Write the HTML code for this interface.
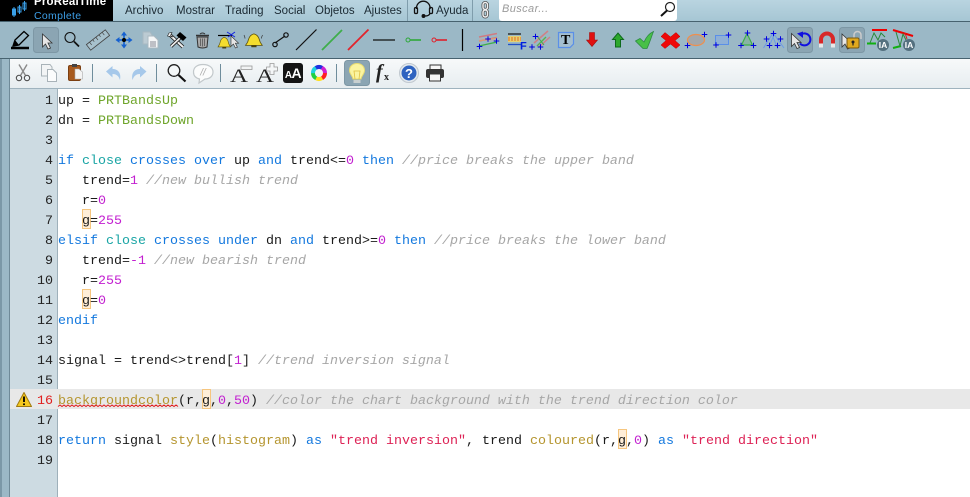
<!DOCTYPE html>
<html><head><meta charset="utf-8"><style>
html,body{margin:0;padding:0;width:970px;height:497px;overflow:hidden;background:#fff}
.a{position:absolute}
#menu{left:0;top:0;width:970px;height:21px;background:linear-gradient(#b9d4e0,#a6c6d4)}
.m{position:absolute;top:4px;font:11.5px/15px "Liberation Sans",sans-serif;color:#1b2a33;white-space:nowrap}
#tb1{left:0;top:21px;width:970px;height:38px;background:#9bb8c6;border-top:1px solid #47626f;border-bottom:1px solid #47626f;box-sizing:border-box}
#tb2{left:0;top:59px;width:970px;height:30px;background:linear-gradient(#f7f9fa,#e7edf0);border-bottom:1px solid #9fb3be;box-sizing:border-box}
#side{left:0;top:89px;width:10px;height:408px;background:#9bb8c6;box-shadow:inset 2px 0 0 #7b98a7,inset -1px 0 0 #6f8a98}
#strip{left:0;top:59px;width:10px;height:30px;background:#9bb8c6;box-shadow:inset 2px 0 0 #7b98a7,inset -1px 0 0 #6f8a98}
#gut{left:10px;top:89px;width:47px;height:408px;background:#cddbe2;border-right:1px solid #9eb0ba}
.hl{position:absolute;left:10px;top:389px;width:960px;height:20px;background:#e8e8e8}
.box{position:absolute;background:#ffeed8;box-shadow:inset 0 0 0 1px #f6c67f;width:9px;height:20px}
pre{margin:0;position:absolute;font:13.333px/20px "Liberation Mono",monospace;color:#1a1a1a;white-space:pre}
#code{left:58px;top:92px}
#nums{left:10px;top:92px;width:43px;text-align:right;color:#222}
b{font-weight:normal}
.k{color:#1378de}.t{color:#1aa5a5}.g{color:#6fa52b}.n{color:#c21fd0}.c{color:#a6a6a6;font-style:italic}.f{color:#b5952f}.s{color:#dd2255}
</style></head><body>
<div class="a" id="menu"></div>
<div class="a" style="left:0;top:0;width:113px;height:21px;background:#000;overflow:hidden">
<div class="a" style="left:34px;top:-5px;font:bold 11.5px/14px 'Liberation Sans',sans-serif;color:#fff;white-space:nowrap;letter-spacing:.2px">ProRealTime</div>
<div class="a" style="left:34px;top:10px;font:10.5px/13px 'Liberation Sans',sans-serif;color:#3d9ee6;white-space:nowrap;letter-spacing:.3px">Complete</div>
</div>
<div class="m" style="left:125px">Archivo</div>
<div class="m" style="left:176px">Mostrar</div>
<div class="m" style="left:225px">Trading</div>
<div class="m" style="left:274px">Social</div>
<div class="m" style="left:315px">Objetos</div>
<div class="m" style="left:364px">Ajustes</div>
<div class="m" style="left:436px">Ayuda</div>
<div class="a" style="left:407px;top:0;width:1px;height:21px;background:#7f9dac"></div>
<div class="a" style="left:472px;top:0;width:1px;height:21px;background:#7f9dac"></div>
<div class="a" style="left:499px;top:0;width:178px;height:21px;background:#fff;border-radius:0 0 3px 3px"></div>
<div class="a" style="left:502px;top:2px;font:italic 11px/15px 'Liberation Sans',sans-serif;color:#9a9a9a;letter-spacing:.4px">Buscar...</div>
<div class="a" id="tb1"></div>
<div class="a" id="tb2"></div>
<div class="a" id="strip"></div>
<div class="a" id="side"></div>
<div class="a" id="gut"></div>
<div class="hl"></div>
<div class="box" style="left:82px;top:209px"></div>
<div class="box" style="left:82px;top:289px"></div>
<div class="box" style="left:202px;top:389px"></div>
<div class="box" style="left:618px;top:429px"></div>
<pre id="nums">1
2
3
4
5
6
7
8
9
10
11
12
13
14
15
<span style="color:#e02020">16</span>
17
18
19</pre>
<pre id="code">up = <b class="g">PRTBandsUp</b>
dn = <b class="g">PRTBandsDown</b>

<b class="k">if</b> <b class="t">close</b> <b class="k">crosses over</b> up <b class="k">and</b> trend&lt;=<b class="n">0</b> <b class="k">then</b> <b class="c">//price breaks the upper band</b>
   trend=<b class="n">1</b> <b class="c">//new bullish trend</b>
   r=<b class="n">0</b>
   g=<b class="n">255</b>
<b class="k">elsif</b> <b class="t">close</b> <b class="k">crosses under</b> dn <b class="k">and</b> trend&gt;=<b class="n">0</b> <b class="k">then</b> <b class="c">//price breaks the lower band</b>
   trend=<b class="n">-1</b> <b class="c">//new bearish trend</b>
   r=<b class="n">255</b>
   g=<b class="n">0</b>
<b class="k">endif</b>

signal = trend&lt;&gt;trend[<b class="n">1</b>] <b class="c">//trend inversion signal</b>

<b class="f">backgroundcolor</b>(r,g,<b class="n">0</b>,<b class="n">50</b>) <b class="c">//color the chart background with the trend direction color</b>

<b class="k">return</b> signal <b class="f">style</b>(<b class="f">histogram</b>) <b class="k">as</b> <b class="s">"trend inversion"</b>, trend <b class="f">coloured</b>(r,g,<b class="n">0</b>) <b class="k">as</b> <b class="s">"trend direction"</b>
</pre>
<svg class="a" style="left:0;top:0" width="970" height="497" viewBox="0 0 970 497" font-family="Liberation Sans,sans-serif">
<defs>
<path id="ptr" d="M0 0V13L3 10 5.500 15 8 14 5.500 9H9.500Z" fill="#e6e6e6" stroke="#333" stroke-width=".8"/>
<path id="pl" d="M-2.800 0H2.800M0-2.800V2.800" stroke="#0000e0" stroke-width="1" fill="none"/>
<g id="bell"><path d="M0 14H16L14 10.500C13 8 13 3 8 1.500C3 3 3 8 2 10.500Z" fill="#f4dd2e" stroke="#5e5310" stroke-width=".8"/><rect x="5.500" y="14" width="5" height="2" fill="#4a4210"/></g>
</defs>
<!-- logo candles -->
<g stroke="#3aa0e8" fill="#3aa0e8"><path d="M14 7V17M19.500 5V14M24.500 1V11" stroke-width="1" fill="none"/><rect x="12.500" y="9" width="3" height="6"/><rect x="18" y="7" width="3" height="5" fill="none"/><rect x="23" y="3" width="3" height="6" fill="none"/></g>
<!-- headset -->
<g fill="none" stroke="#111" stroke-width="1.300"><path d="M416.500 9V8a6.800 6.800 0 0 1 13.600 0V9"/><rect x="414.500" y="7.500" width="3" height="6" rx="1.300"/><rect x="429.500" y="7.500" width="3" height="6" rx="1.300"/><path d="M430 13.500Q429 16 425 16"/><circle cx="423.500" cy="16" r="1.300" fill="#111"/></g>
<!-- link -->
<g fill="none" stroke="#555" stroke-width="3"><rect x="483" y="2.500" width="4.500" height="7" rx="2.200"/><rect x="483" y="10" width="4.500" height="7" rx="2.200"/></g>
<g fill="none" stroke="#f0f0f0" stroke-width="1.400"><rect x="483" y="2.500" width="4.500" height="7" rx="2.200"/><rect x="483" y="10" width="4.500" height="7" rx="2.200"/></g>
<!-- search lens -->
<circle cx="670" cy="7" r="4.500" fill="#fff" stroke="#222" stroke-width="1.200"/><path d="M667 10.500L661 16" stroke="#111" stroke-width="2"/>
<!-- selected boxes -->
<g fill="#8ba5b3" stroke="#7d97a5"><rect x="33.500" y="27.500" width="25" height="25" rx="3"/><rect x="787.500" y="27.500" width="25" height="25" rx="3"/><rect x="839.500" y="27.500" width="25" height="25" rx="3"/><rect x="344.500" y="60.500" width="25" height="25" rx="3"/></g>
<!-- pencil -->
<path d="M11 48H29" stroke="#000" stroke-width="2.500"/><path d="M13 46L15 40 24 31.500 28.500 35.500 19 45Z" fill="#9bb8c6" stroke="#000" stroke-width="1.300"/><path d="M13 46L15 40 19 45Z" fill="#000"/>
<use href="#ptr" x="42.500" y="34"/>
<!-- magnifier -->
<circle cx="70" cy="37.500" r="5" fill="none" stroke="#111" stroke-width="1.100"/><path d="M74 41.500L79 46.500" stroke="#111" stroke-width="1.800"/>
<!-- ruler -->
<g transform="translate(98 40) rotate(-38)"><rect x="-12" y="-3.500" width="24" height="7" fill="#a7c1cd" stroke="#444" stroke-width=".8"/><path d="M-8-3.500V0M-4-3.500V-1M0-3.500V0M4-3.500V-1M8-3.500V0" stroke="#444" stroke-width=".7"/></g>
<!-- move -->
<g fill="#1560d0"><path d="M124 31.500L127 35.500H121Z"/><path d="M124 48.500L127 44.500H121Z"/><path d="M115.500 40L119.500 37V43Z"/><path d="M132.500 40L128.500 37V43Z"/><rect x="123.200" y="35" width="1.600" height="10"/><rect x="119" y="39.200" width="10" height="1.600"/></g><circle cx="124" cy="40" r="2" fill="#000"/>
<!-- copy disabled -->
<path d="M143 32H150L152 35V44H143Z" fill="#bccbd3" stroke="#a8b9c2"/><path d="M148 36H154L158 40V48H148Z" fill="#f4f6f7" stroke="#aab8c0"/><path d="M150 42H156M150 44H156M150 46H156" stroke="#667" stroke-width=".7"/>
<!-- tools -->
<path d="M170 35L183 47" stroke="#222" stroke-width="3.600"/><path d="M170 35L183 47" stroke="#f0f0f0" stroke-width="2"/><path d="M167.500 36L169 33 172 32.500 170.500 35.500 173 37Z" fill="#f0f0f0" stroke="#222" stroke-width=".6"/><path d="M171 46.500L181 37" stroke="#222" stroke-width="3.400"/><path d="M171 46.500L181 37" stroke="#f0f0f0" stroke-width="1.600"/><path d="M180 32L186.500 37.500 183 41 176.500 35.500Z" fill="#000"/>
<!-- trash -->
<path d="M196 35.500H209" stroke="#333" stroke-width="1.500"/><path d="M200 34Q202.500 32 205 34" fill="none" stroke="#333"/><path d="M197 37H208L207 47Q202.500 49 198 47Z" fill="#a9a9a9" stroke="#333"/><path d="M200.500 38.500V46M202.500 38.500V46.500M204.500 38.500V46" stroke="#555" stroke-width=".8"/>
<!-- bell + cross -->
<path d="M218 35.500H232" stroke="#000" stroke-width="1.200"/><path d="M227 32L235 37M235 32L228 37" stroke="#1020e0" stroke-width="1"/>
<use href="#bell" transform="translate(218 36) scale(.78)"/>
<use href="#ptr" transform="translate(231 36) scale(.8)"/>
<!-- bell ringing -->
<use href="#bell" transform="translate(245.500 32.500) scale(1.05 .92)"/>
<path d="M244 35Q245 37 245 38.500M262.500 35Q261.500 37 261.500 38.500" stroke="#333" fill="none" stroke-width=".7"/>
<!-- node line -->
<path d="M275 43L285 36" stroke="#111" stroke-width="1.200"/><circle cx="275" cy="44.500" r="2.200" fill="none" stroke="#111" stroke-width="1.200"/><circle cx="286" cy="35" r="2.200" fill="none" stroke="#111" stroke-width="1.200"/>
<!-- lines -->
<path d="M296 50L316.500 29.500" stroke="#111" stroke-width="1.200"/>
<path d="M322 50L342 30" stroke="#3eae4a" stroke-width="1.800"/>
<path d="M348 50L368.500 29.500" stroke="#e3232b" stroke-width="1.800"/>
<path d="M373 40H395" stroke="#111" stroke-width="1.300"/>
<circle cx="408" cy="40" r="2" fill="none" stroke="#2ea83a"/><path d="M410 40H421" stroke="#2ea83a" stroke-width="1.600"/>
<circle cx="434" cy="40" r="2" fill="none" stroke="#e0202a"/><path d="M436 40H447" stroke="#e0202a" stroke-width="1.600"/>
<path d="M462.500 29V51" stroke="#000" stroke-width="1.200"/>
<!-- channel -->
<path d="M479 37L497 33.500M479 41L497 37.500" stroke="#d07a80" stroke-width="1.500"/><path d="M479 41L497 38" stroke="#e09a5a"/><path d="M479 46L497 42" stroke="#3eae4a" stroke-width="1.300"/><path d="M479 38H497V41H479Z" fill="#d8a09a" opacity=".35"/>
<use href="#pl" x="479.500" y="46.500"/><use href="#pl" x="488" y="39"/><use href="#pl" x="496.500" y="41"/>
<!-- fib -->
<path d="M508 34H521" stroke="#111" stroke-width="1.200"/><rect x="508" y="36" width="13" height="6" fill="#f6d75a" opacity=".8"/><path d="M508 38H521M508 40H521" stroke="#e86a20" stroke-dasharray="2 1"/><path d="M508 44.500H522" stroke="#2050c8" stroke-width="1.300"/>
<text x="520" y="49.500" font-size="11" font-weight="bold" fill="#0020e0">F</text>
<!-- pitch -->
<path d="M534 43L548 31" stroke="#d08086" stroke-width="1.500"/><path d="M539 47L550 37" stroke="#d08086" stroke-width="1.500"/><path d="M537 46L546 37" stroke="#5cb04a" stroke-width="1.300"/><path d="M537 36L544 45" stroke="#3eae4a"/>
<use href="#pl" x="535.500" y="36.500"/><use href="#pl" x="532" y="47"/><use href="#pl" x="540.500" y="47"/>
<!-- T -->
<path d="M558.500 32.500H573.500V44L570 47.500H558.500Z" fill="#a4bfd0" stroke="#5a8fe8" stroke-width="1.200"/>
<text x="561" y="44" font-family="Liberation Serif,serif" font-size="14" font-weight="bold" fill="#000">T</text>
<!-- arrows -->
<path d="M589.500 32.500H594.500V40H597.500L592 46.500 586.500 40H589.500Z" fill="#e01010" stroke="#a01010" stroke-width=".6"/>
<path d="M615.500 47H620.500V39.500H623.500L618 33 612.500 39.500H615.500Z" fill="#2da82d" stroke="#0e6a1c"/>
<!-- check -->
<path d="M635.500 41L640 38.500 644 42C646 37.500 649 33.500 653.500 31.500C651.500 36.500 650 42 647 48.500H643Z" fill="#48c048" stroke="#2e8a44" stroke-width=".8"/>
<!-- X -->
<path d="M661 36.500L665 32.500 670.500 37 676 32.500 680 36.500 675 40.500 680 45 676 48.500 670.500 44 665 48.500 661 45 666 40.500Z" fill="#ee0808" stroke="#b00" stroke-width=".5"/>
<!-- ellipse -->
<ellipse cx="696" cy="40" rx="8.500" ry="5.500" fill="#a3a8ac" stroke="#ee8f4e" stroke-width="1.200"/><use href="#pl" x="704.500" y="34.500"/><use href="#pl" x="687.500" y="45.500"/>
<!-- rect -->
<rect x="715.500" y="35.500" width="13" height="9" fill="#8fb0d6" stroke="#5a8fe8"/><use href="#pl" x="728.500" y="35"/><use href="#pl" x="716" y="45"/>
<!-- triangle -->
<path d="M747 33.500L741.500 45H752.500Z" fill="#87b4a4" stroke="#3eae4a" stroke-width="1.200"/><use href="#pl" x="747.500" y="33"/><use href="#pl" x="741" y="45.500"/><use href="#pl" x="753.500" y="45.500"/>
<!-- multi -->
<path d="M763.500 48L773 33 784 48M769 47L773 37 777 47" stroke="#6a9ae8" fill="none"/><use href="#pl" x="773.500" y="33.500"/><use href="#pl" x="766.500" y="39"/><use href="#pl" x="780.500" y="39"/><use href="#pl" x="769.500" y="45.500"/><use href="#pl" x="777.500" y="45.500"/>
<!-- pointer undo -->
<use href="#ptr" x="791.500" y="33.500"/><path d="M801 34.500A6 6 0 1 1 800 43.500" fill="none" stroke="#1010e0" stroke-width="2"/><path d="M797 33.500L803 31.500V38Z" fill="#1010e0"/>
<!-- magnet -->
<path d="M821 47V39.500a6 6 0 0 1 12 0V47" fill="none" stroke="#d82828" stroke-width="4"/><rect x="819" y="43.500" width="4" height="4" fill="#e8e8e8"/><rect x="831" y="43.500" width="4" height="4" fill="#e8e8e8"/>
<!-- pointer lock -->
<use href="#ptr" x="842" y="34"/><path d="M854 39V35a3.500 3.500 0 0 1 7 0V39" fill="none" stroke="#ccc" stroke-width="1.500"/><rect x="847" y="38" width="12" height="10" rx="1.500" fill="#e0a81e" stroke="#7a5a10"/><circle cx="853" cy="42" r="1.500" fill="#222"/><rect x="852.400" y="42" width="1.200" height="3.500" fill="#222"/>
<!-- IA 1 -->
<path d="M872 30H887" stroke="#f00000" stroke-width="2"/><path d="M867 43.500H876" stroke="#10b010" stroke-width="2"/><path d="M870 43L874 33 878 40 881 33 885 37" fill="none" stroke="#2a8a3a" stroke-width="1"/>
<circle cx="883" cy="45" r="6" fill="#54707f"/><text x="883" y="48" text-anchor="middle" font-size="8.500" font-weight="bold" fill="#fff">IA</text>
<!-- IA 2 -->
<path d="M893 30L913 36" stroke="#f00000" stroke-width="2"/><path d="M893 48L901 46" stroke="#10b010" stroke-width="2"/><path d="M896 32L900 46 903 34 906 40" fill="none" stroke="#2a8a3a" stroke-width="1"/><path d="M905 33L907 39" stroke="#d02020"/>
<circle cx="909" cy="45" r="6" fill="#54707f"/><text x="909" y="48" text-anchor="middle" font-size="8.500" font-weight="bold" fill="#fff">IA</text>
<!-- toolbar 2 -->
<g fill="none" stroke="#444" stroke-width="1"><circle cx="19" cy="78" r="2.700"/><circle cx="27" cy="78" r="2.700"/><path d="M20.500 75.500L27 64.500M25.500 75.500L19 64.500" stroke="#8a8a8a" stroke-width="1.400"/></g>
<path d="M41.500 64.500H50L52 67V76H41.500Z" fill="#f2f4f5" stroke="#a8b2b8"/><path d="M47.500 69.500H53L56.500 73V81.500H47.500Z" fill="#fbfcfc" stroke="#a8b2b8"/>
<rect x="68.500" y="65.500" width="12" height="15" rx="1.500" fill="#a85a1e" stroke="#7b3f12"/><rect x="72" y="64" width="5" height="3" fill="#444"/><path d="M75 69H79L82.500 72V79H75Z" fill="#f4f4f4" stroke="#aaa" stroke-width=".6"/>
<g fill="#a6c8ea"><path d="M106 71.500L112.500 66V69C118 69 121.500 73 120 80 118.500 75.500 116 74 112.500 74V77.500Z"/><path d="M146.500 71.500L140 66V69C134.500 69 131 73 132.500 80 134 75.500 136.500 74 140 74V77.500Z"/></g>
<circle cx="174" cy="70.500" r="5.800" fill="#f4f7f8" stroke="#222" stroke-width="1.300"/><path d="M178.500 75L185.500 81.500" stroke="#111" stroke-width="2.200"/>
<path d="M203 64.500C209 64.500 213 67.500 213 72 213 76 210 79 205 79L199 83 199.500 79C195.500 78 193.500 75.500 193.500 72 193.500 67.500 197 64.500 203 64.500Z" fill="#fbfcfc" stroke="#c2c8cb" stroke-width="1.200"/><text x="203" y="75.500" text-anchor="middle" font-size="10" font-style="italic" fill="#aaa">//</text>
<g fill="#6f8d9c"><rect x="92" y="64" width="1" height="18"/><rect x="156" y="64" width="1" height="18"/><rect x="220" y="64" width="1" height="18"/><rect x="336" y="64" width="1" height="18"/></g>
<text x="230" y="82" font-family="Liberation Serif,serif" font-size="19" fill="#222" textLength="18" lengthAdjust="spacingAndGlyphs">A</text><rect x="241" y="66" width="11" height="3.500" fill="#f2f4f5" stroke="#999" stroke-width=".8"/>
<text x="256" y="82" font-family="Liberation Serif,serif" font-size="19" fill="#222" textLength="18" lengthAdjust="spacingAndGlyphs">A</text><path d="M270 63.500H274V67H277.500V71H274V74.500H270V71H266.500V67H270Z" fill="#f4f6f7" stroke="#999" stroke-width=".8"/>
<rect x="283" y="63" width="20" height="20" rx="3" fill="#141414"/><text x="293" y="78" text-anchor="middle" font-size="14" font-weight="bold" fill="#fff" letter-spacing="-.5"><tspan font-size="10">A</tspan>A</text>
<circle cx="319" cy="73" r="6" fill="none" stroke="#ff2020" stroke-width="4" stroke-dasharray="6.300 31"/><circle cx="319" cy="73" r="6" fill="none" stroke="#ffe020" stroke-width="4" stroke-dasharray="6.300 31" transform="rotate(60 319 73)"/><circle cx="319" cy="73" r="6" fill="none" stroke="#20d040" stroke-width="4" stroke-dasharray="6.300 31" transform="rotate(120 319 73)"/><circle cx="319" cy="73" r="6" fill="none" stroke="#20d0e0" stroke-width="4" stroke-dasharray="6.300 31" transform="rotate(180 319 73)"/><circle cx="319" cy="73" r="6" fill="none" stroke="#2030e0" stroke-width="4" stroke-dasharray="6.300 31" transform="rotate(240 319 73)"/><circle cx="319" cy="73" r="6" fill="none" stroke="#d020d0" stroke-width="4" stroke-dasharray="6.300 31" transform="rotate(300 319 73)"/>
<path d="M357 63.500C352.500 63.500 349.500 66.500 349.500 70.500 349.500 74 352.500 75.500 353 79H361C361.500 75.500 364.500 74 364.500 70.500 364.500 66.500 361.500 63.500 357 63.500Z" fill="#faf4a0" stroke="#e8dc70"/><path d="M353.500 80H360.500V83H353.500Z" fill="#c8d0d0"/><path d="M355 79L354 71H360L359 79" fill="none" stroke="#e0c040" stroke-width=".8"/>
<text x="376" y="78" font-family="Liberation Serif,serif" font-size="20" font-style="italic" font-weight="bold" fill="#222">f</text><text x="384" y="80" font-family="Liberation Serif,serif" font-size="10" font-weight="bold" fill="#222">x</text>
<circle cx="409" cy="73" r="9.500" fill="#e4eaee" stroke="#c0c8cf"/><circle cx="409" cy="73" r="7.500" fill="#2f63c0"/><text x="409" y="78" text-anchor="middle" font-size="13" font-weight="bold" fill="#fff">?</text>
<rect x="430" y="65" width="11" height="5" fill="#f6f6f6" stroke="#333"/><rect x="426" y="69" width="18" height="9" rx="2" fill="#333"/><rect x="429.500" y="74" width="11" height="7" fill="#f4f4f4" stroke="#333"/>
<!-- warning -->
<path d="M24 392.500L31.500 406.500H16.500Z" fill="#f5c81e" stroke="#a07a10" stroke-linejoin="round"/><path d="M24 396.500V402" stroke="#000" stroke-width="1.800"/><circle cx="24" cy="404.300" r="1" fill="#000"/>
<!-- squiggle -->
<path d="M58 406.500l2-1.500 2 1.500 2-1.500 2 1.500 2-1.500 2 1.500 2-1.500 2 1.500 2-1.500 2 1.500 2-1.500 2 1.500 2-1.500 2 1.500 2-1.500 2 1.500 2-1.500 2 1.500 2-1.500 2 1.500 2-1.500 2 1.500 2-1.500 2 1.500 2-1.500 2 1.500 2-1.500 2 1.500 2-1.500 2 1.500 2-1.500 2 1.500 2-1.500 2 1.500 2-1.500 2 1.500 2-1.500 2 1.500 2-1.500 2 1.500 2-1.500 2 1.500 2-1.500 2 1.500 2-1.500 2 1.500 2-1.500 2 1.500 2-1.500 2 1.500 2-1.500 2 1.500 2-1.500 2 1.500 2-1.500 2 1.500 2-1.500 2 1.500 2-1.500 2 1.500" fill="none" stroke="#e01818" stroke-width="1"/>
</svg>
</body></html>
